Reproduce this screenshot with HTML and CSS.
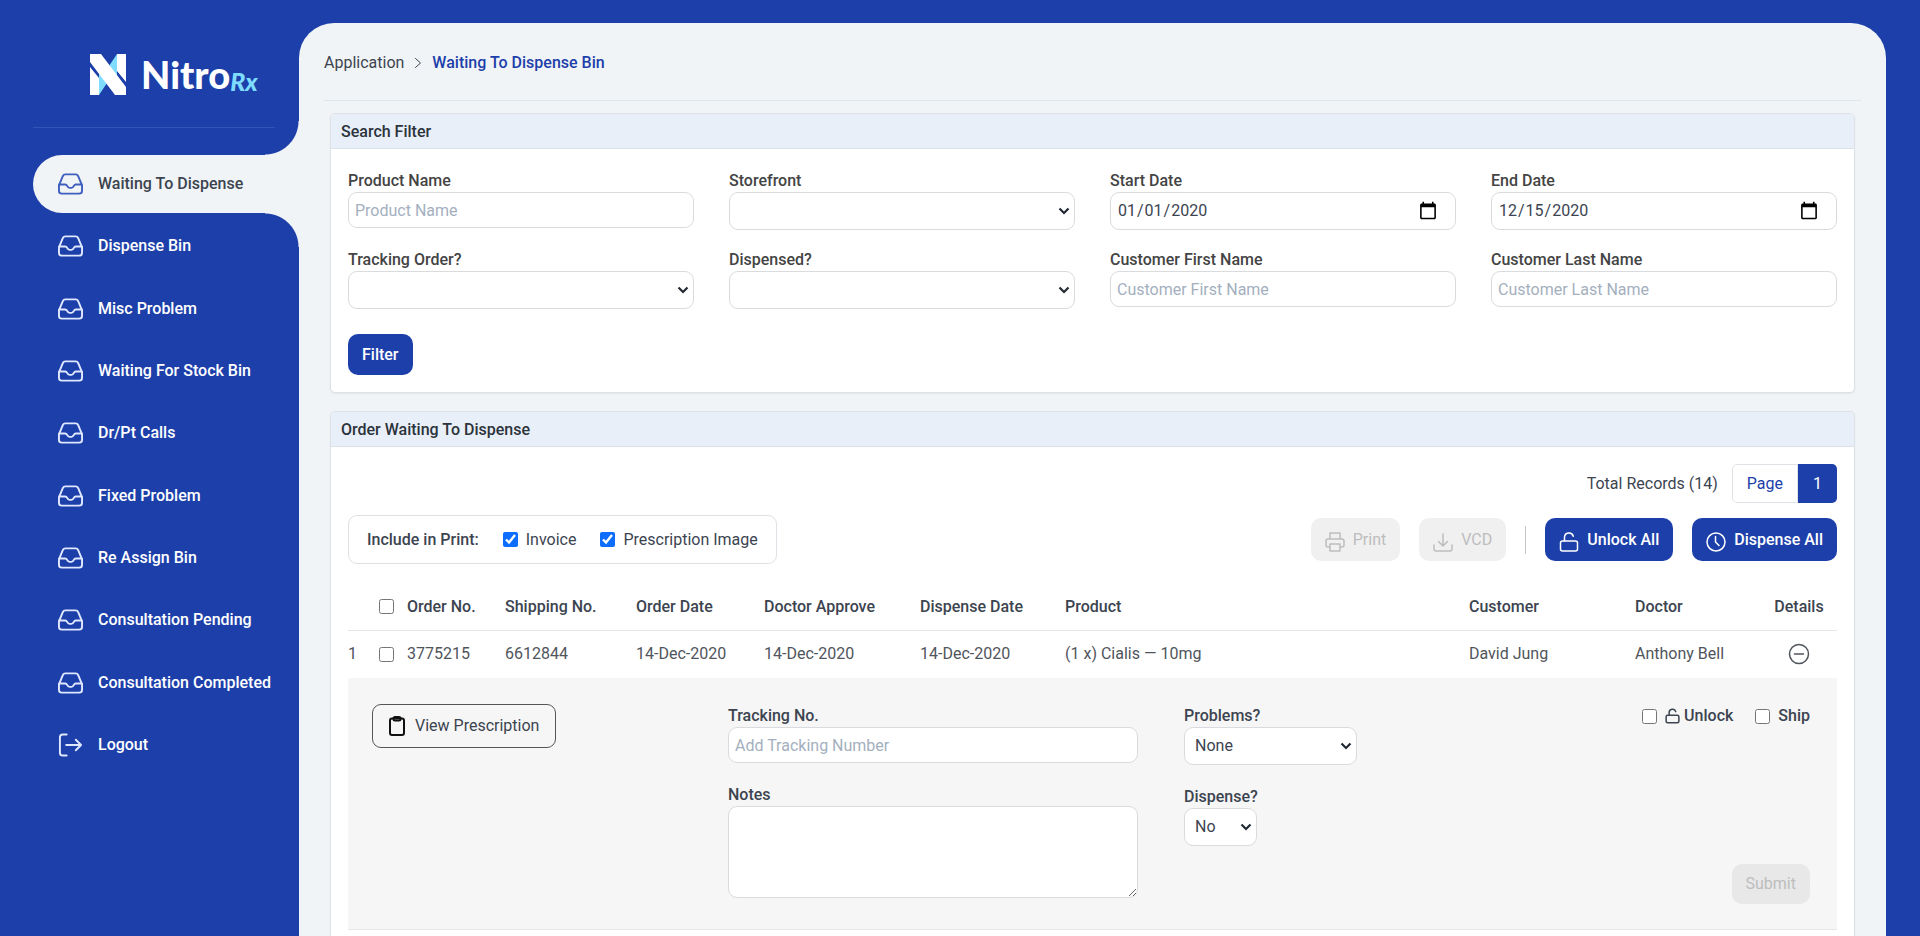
FILE: index.html
```
<!DOCTYPE html>
<html lang="en">
  <head>
    <meta charset="UTF-8" />
    <meta name="viewport" content="width=device-width, initial-scale=1.0" />
    <title>NitroRx | Waiting To Dispense Bin</title>
    <link rel="stylesheet" href="styles.css">
  </head>
  <body>
    <!-- shared icons -->
    <svg class="sprite" aria-hidden="true">
      <symbol id="inbox" viewBox="0 0 26 22">
        <path d="M1 12.500 5 2.900C5.500 1.700 6.300 1 7.600 1h10.800c1.300 0 2.100.7 2.600 1.900l4 9.600V18c0 2-1 3-3 3H4c-2 0-3-1-3-3z" />
        <path d="M1.300 11.500h6.200c1 0 1.500.5 2 1.500.6 1.300 1.300 2 2.500 2h2c1.200 0 1.900-.7 2.500-2 .5-1 1-1.500 2-1.500h6.200" />
      </symbol>
      <symbol id="logout" viewBox="0 0 26 24">
        <path d="M9 1H5C3 1 2 2 2 4v16c0 2 1 3 3 3h4M8.500 12H24M18.500 6.500 24 12l-5.500 5.500" />
      </symbol>
      <symbol id="unlock" viewBox="0 0 20 20">
        <rect x="1.500" y="9" width="17" height="10" rx="2" />
        <path d="M5.500 9V5.500a4.500 4.500 0 0 1 8.800-1.300" />
      </symbol>
    </svg>

    <div class="layout">
      <aside class="sidebar">
        <a class="logo" href="#">
          <svg class="logo-mark" viewBox="0 0 36 41" aria-hidden="true">
            <path d="M27 0v27L17 15z" fill="#7fdcff" />
            <path d="M9 41V14l10 12z" fill="#7fdcff" />
            <path d="M27 0h9v28l-9-11z" fill="#fff" />
            <path d="M0 13l9 11v17H0z" fill="#fff" />
            <path d="M27 18l9 11v3l-9-11zM0 9l9 11v3L0 12z" fill="#1d3faa" />
            <path d="M0 0h11l25 33v8H25L0 8z" fill="#fff" />
          </svg>
          <span class="logo-name">Nitro</span><span class="logo-rx">Rx</span>
        </a>
        <nav>
          <ul class="menu">
            <li><a class="menu-link active" href="#"><svg class="menu-icon"><use href="#inbox" /></svg>Waiting To Dispense</a></li>
            <li><a class="menu-link" href="#"><svg class="menu-icon"><use href="#inbox" /></svg>Dispense Bin</a></li>
            <li><a class="menu-link" href="#"><svg class="menu-icon"><use href="#inbox" /></svg>Misc Problem</a></li>
            <li><a class="menu-link" href="#"><svg class="menu-icon"><use href="#inbox" /></svg>Waiting For Stock Bin</a></li>
            <li><a class="menu-link" href="#"><svg class="menu-icon"><use href="#inbox" /></svg>Dr/Pt Calls</a></li>
            <li><a class="menu-link" href="#"><svg class="menu-icon"><use href="#inbox" /></svg>Fixed Problem</a></li>
            <li><a class="menu-link" href="#"><svg class="menu-icon"><use href="#inbox" /></svg>Re Assign Bin</a></li>
            <li><a class="menu-link" href="#"><svg class="menu-icon"><use href="#inbox" /></svg>Consultation Pending</a></li>
            <li><a class="menu-link" href="#"><svg class="menu-icon"><use href="#inbox" /></svg>Consultation Completed</a></li>
            <li><a class="menu-link" href="#"><svg class="menu-icon"><use href="#logout" /></svg>Logout</a></li>
          </ul>
        </nav>
      </aside>

      <main class="content">
        <nav class="breadcrumb">
          <a href="#">Application</a>
          <svg class="crumb-arrow" viewBox="0 0 8 12"><path d="m1.500 1.500 5 4.500-5 4.500" /></svg>
          <a class="current" href="#">Waiting To Dispense Bin</a>
        </nav>

        <section class="card">
          <h2 class="card-title">Search Filter</h2>
          <form class="filter">
            <div class="field">
              <label for="product">Product Name</label>
              <input id="product" class="control" type="text" placeholder="Product Name" />
            </div>
            <div class="field">
              <label for="storefront">Storefront</label>
              <select id="storefront" class="control"><option></option></select>
            </div>
            <div class="field">
              <label for="start">Start Date</label>
              <input id="start" class="control" type="date" value="2020-01-01" />
            </div>
            <div class="field">
              <label for="end">End Date</label>
              <input id="end" class="control" type="date" value="2020-12-15" />
            </div>
            <div class="field">
              <label for="tracking-order">Tracking Order?</label>
              <select id="tracking-order" class="control"><option></option></select>
            </div>
            <div class="field">
              <label for="dispensed">Dispensed?</label>
              <select id="dispensed" class="control"><option></option></select>
            </div>
            <div class="field">
              <label for="first-name">Customer First Name</label>
              <input id="first-name" class="control" type="text" placeholder="Customer First Name" />
            </div>
            <div class="field">
              <label for="last-name">Customer Last Name</label>
              <input id="last-name" class="control" type="text" placeholder="Customer Last Name" />
            </div>
            <button class="btn btn-filter" type="button">Filter</button>
          </form>
        </section>

        <section class="card">
          <h2 class="card-title">Order Waiting To Dispense</h2>
          <div class="orders">
            <div class="pager">
              <span>Total Records (14)</span>
              <div class="pages">
                <a class="page-label" href="#">Page</a><a class="page-number" href="#">1</a>
              </div>
            </div>

            <div class="toolbar">
              <div class="print-options">
                <span class="print-title">Include in Print:</span>
                <label class="check"><input type="checkbox" checked />Invoice</label>
                <label class="check"><input type="checkbox" checked />Prescription Image</label>
              </div>
              <div class="actions">
                <button class="btn btn-action" type="button" disabled>
                  <svg class="btn-icon" viewBox="0 0 20 20">
                    <path d="M5 7V1h10v6M5 15H3c-1.300 0-2-.7-2-2V9c0-1.300.7-2 2-2h14c1.300 0 2 .7 2 2v4c0 1.300-.7 2-2 2h-2M5 12h10v7H5z" />
                  </svg>
                  Print
                </button>
                <button class="btn btn-action" type="button" disabled>
                  <svg class="btn-icon" viewBox="0 0 20 20">
                    <path d="M1 13v4c0 1.300.7 2 2 2h14c1.300 0 2-.7 2-2v-4M10 2v12M5.500 9.500 10 14l4.500-4.500" />
                  </svg>
                  VCD
                </button>
                <span class="separator"></span>
                <button class="btn btn-action" type="button">
                  <svg class="btn-icon"><use href="#unlock" /></svg>
                  Unlock All
                </button>
                <button class="btn btn-action" type="button">
                  <svg class="btn-icon" viewBox="0 0 20 20">
                    <circle cx="10" cy="10" r="9" />
                    <path d="M9.500 4.500V10l3.500 3.500" />
                  </svg>
                  Dispense All
                </button>
              </div>
            </div>

            <table class="table">
              <colgroup>
                <col class="col-index" />
                <col class="col-check" />
                <col class="col-order" />
                <col class="col-shipping" />
                <col class="col-date" />
                <col class="col-approve" />
                <col class="col-dispense" />
                <col />
                <col class="col-customer" />
                <col class="col-doctor" />
                <col class="col-details" />
              </colgroup>
              <thead>
                <tr>
                  <th></th>
                  <th><input type="checkbox" aria-label="Select all orders" /></th>
                  <th>Order No.</th>
                  <th>Shipping No.</th>
                  <th>Order Date</th>
                  <th>Doctor Approve</th>
                  <th>Dispense Date</th>
                  <th>Product</th>
                  <th>Customer</th>
                  <th>Doctor</th>
                  <th class="center">Details</th>
                </tr>
              </thead>
              <tbody>
                <tr>
                  <td>1</td>
                  <td><input type="checkbox" aria-label="Select order 3775215" /></td>
                  <td>3775215</td>
                  <td>6612844</td>
                  <td>14-Dec-2020</td>
                  <td>14-Dec-2020</td>
                  <td>14-Dec-2020</td>
                  <td>(1 x) Cialis — 10mg</td>
                  <td>David Jung</td>
                  <td>Anthony Bell</td>
                  <td class="center">
                    <button class="toggle" type="button" aria-label="Hide details">
                      <svg viewBox="0 0 22 22"><circle cx="11" cy="11" r="9.500" /><path d="M6.500 11h9" /></svg>
                    </button>
                  </td>
                </tr>
                <tr>
                  <td class="detail-cell" colspan="11">
                    <div class="detail">
                      <div class="detail-view">
                        <button class="btn-outline" type="button">
                          <svg viewBox="0 0 16 20">
                            <rect x="1" y="2.500" width="14" height="16.500" rx="2" />
                            <rect x="4.500" y="1" width="7" height="3.500" rx="1.500" />
                          </svg>
                          View Prescription
                        </button>
                      </div>
                      <div class="detail-notes">
                        <div class="field">
                          <label for="tracking-no">Tracking No.</label>
                          <input id="tracking-no" class="control" type="text" placeholder="Add Tracking Number" />
                        </div>
                        <div class="field">
                          <label for="notes">Notes</label>
                          <textarea id="notes" class="control notes"></textarea>
                        </div>
                      </div>
                      <div class="detail-status">
                        <div class="field">
                          <label for="problems">Problems?</label>
                          <select id="problems" class="control problems"><option>None</option></select>
                        </div>
                        <div class="field">
                          <label for="dispense">Dispense?</label>
                          <select id="dispense" class="control dispense"><option>No</option></select>
                        </div>
                      </div>
                      <div class="detail-submit">
                        <div class="flags">
                          <label class="check"><input type="checkbox" /><span class="lock-label"><svg class="lock"><use href="#unlock" /></svg>Unlock</span></label>
                          <label class="check"><input type="checkbox" />Ship</label>
                        </div>
                        <button class="btn btn-submit" type="button" disabled>Submit</button>
                      </div>
                    </div>
                  </td>
                </tr>
              </tbody>
            </table>
          </div>
        </section>
      </main>
    </div>
  </body>
</html>
```
FILE: styles.css
```
* {
  box-sizing: border-box;
}
html,
body {
  height: 100%;
}
body {
  margin: 0;
  overflow: hidden;
  background-color: #1d3faa;
  color: #3c4450;
  font-family: Roboto, "Liberation Sans", sans-serif;
  font-size: 16px;
  line-height: 24px;
}
a {
  color: inherit;
  text-decoration: none;
}
svg {
  fill: none;
  stroke: currentColor;
  stroke-width: 2;
  stroke-linecap: round;
  stroke-linejoin: round;
}
input,
select,
textarea,
button {
  font: inherit;
  color: inherit;
}
input[type="checkbox"] {
  width: 15px;
  height: 15px;
  margin: 0;
  accent-color: #0d6efd;
}
.sprite {
  display: none;
}

.layout {
  display: flex;
  height: 100%;
  padding: 23px 34px 0 33px;
}

/* Sidebar */
.sidebar {
  flex: 0 0 266px;
}
.logo {
  display: flex;
  align-items: center;
  height: 105px;
  margin-right: 24px;
  padding: 0 0 2px 57px;
  border-bottom: 1px solid #3254b8;
  color: #fff;
}
.logo-mark {
  width: 36px;
  height: 41px;
  margin-right: 15px;
  stroke: none;
}
.logo-name {
  font-family: Lato, sans-serif;
  font-size: 38px;
  font-weight: 900;
  line-height: 48px;
}
.logo-rx {
  align-self: flex-end;
  margin-bottom: 32px;
  color: #7fdcff;
  font-family: Lato, sans-serif;
  font-size: 25px;
  font-style: italic;
  font-weight: 900;
  line-height: 24px;
}
.menu {
  display: flex;
  flex-direction: column;
  justify-content: space-between;
  min-height: 619px;
  margin: 27px 0 0;
  padding: 0;
  list-style: none;
}
.menu-link {
  display: flex;
  align-items: center;
  height: 58px;
  padding-left: 25px;
  color: #fff;
  font-weight: 500;
}
.menu-icon {
  width: 25px;
  height: 24px;
  margin-right: 15px;
  color: #dfe8ff;
  stroke-width: 2;
}
.menu-link.active {
  position: relative;
  border-radius: 29px 0 0 29px;
  background-color: #f1f4f6;
  color: #3c4450;
}
.active .menu-icon {
  color: #3f5fc0;
}
/* Rounded notches above and below the active link */
.menu-link.active::before,
.menu-link.active::after {
  content: "";
  position: absolute;
  right: 0;
  width: 34px;
  height: 34px;
}
.menu-link.active::before {
  bottom: 100%;
  background: radial-gradient(circle at 0 0, transparent 33px, #f1f4f6 34px);
}
.menu-link.active::after {
  top: 100%;
  background: radial-gradient(circle at 0 100%, transparent 33px, #f1f4f6 34px);
}

/* Content */
.content {
  flex: 1;
  min-width: 0;
  padding: 0 25px;
  border-radius: 35px 35px 0 0;
  background-color: #f1f4f6;
  overflow: hidden;
}
.breadcrumb {
  display: flex;
  align-items: center;
  height: 78px;
  margin-bottom: 12px;
  padding-top: 3px;
  border-bottom: 1px solid #e0e7ec;
}
.crumb-arrow {
  width: 8px;
  height: 12px;
  margin: 0 10px;
  stroke-width: 1;
}
.breadcrumb .current {
  color: #1d3faa;
  font-weight: 500;
}
.card {
  margin: 0 6px 18px;
  border: 1px solid #dde2e6;
  border-radius: 5px;
  background-color: #fff;
  box-shadow: 0 1px 2px rgba(0, 0, 0, 0.06);
}
.card-title {
  margin: 0;
  padding: 6px 10px 4px;
  border-bottom: 1px solid #dae1e7;
  border-radius: 4px 4px 0 0;
  background-color: #e8eff9;
  font-size: 16px;
  font-weight: 500;
  line-height: 24px;
  color: #2c333b;
}
.filter {
  display: grid;
  grid-template-columns: repeat(4, 1fr);
  column-gap: 35px;
  padding: 20px 17px 17px;
}
.field {
  min-height: 79px;
}
.field label {
  display: block;
  color: #444;
  font-weight: 500;
  line-height: 23px;
}
.control {
  display: block;
  width: 100%;
  height: 36px;
  padding: 0 6px;
  border: 1px solid #d9dbdf;
  border-radius: 9px;
  background-color: #fff;
}
.control::placeholder {
  color: #a4afbe;
}
select.control,
input[type="date"].control {
  height: 38px;
}
select.control {
  appearance: none;
  padding: 0 24px 0 10px;
  background-image: url("data:image/svg+xml,%3Csvg xmlns='http://www.w3.org/2000/svg' viewBox='0 0 12 8'%3E%3Cpath d='M1.500 1.500 6 6l4.500-4.500' fill='none' stroke='%23222933' stroke-width='2.200'/%3E%3C/svg%3E");
  background-position: right 4px center;
  background-repeat: no-repeat;
  background-size: 12px 8px;
}
input[type="date"].control {
  padding-right: 15px;
}
input[type="date"]::-webkit-calendar-picker-indicator {
  width: 20px;
  height: 20px;
}
.btn {
  height: 43px;
  border: 0;
  border-radius: 10px;
  background-color: #1d3faa;
  color: #fff;
  font-weight: 500;
}
.btn:disabled {
  background-color: #f0f0f0;
  color: #bdbdbd;
  font-weight: 400;
}
.btn-filter {
  justify-self: start;
  height: 41px;
  padding: 0 14px;
  margin-top: 7px;
}

/* Orders */
.orders {
  padding: 17px;
}
.pager,
.toolbar,
.actions,
.print-options,
.pages {
  display: flex;
  align-items: center;
}
.pager {
  justify-content: flex-end;
  gap: 14px;
  margin-bottom: 12px;
}
.pages {
  height: 39px;
  border-radius: 5px;
  overflow: hidden;
}
.page-label,
.page-number {
  height: 39px;
  line-height: 39px;
}
.page-label {
  padding: 0 14px;
  border: 1px solid #dee2e6;
  border-radius: 5px 0 0 5px;
  color: #1d3faa;
  line-height: 37px;
}
.page-number {
  padding: 0 15px;
  background-color: #1d3faa;
  color: #fff;
}
.toolbar {
  justify-content: space-between;
}
.print-options {
  gap: 24px;
  height: 49px;
  padding: 0 18px;
  border: 1px solid #dee2e6;
  border-radius: 9px;
}
.print-title {
  font-weight: 500;
}
.check {
  display: flex;
  align-items: center;
  gap: 8px;
}
.actions {
  gap: 19px;
}
.btn-action {
  display: flex;
  align-items: center;
  gap: 8px;
  padding: 0 14px;
}
.btn-icon {
  width: 20px;
  height: 20px;
  margin-top: 4px;
  stroke-width: 1.5;
}
.separator {
  width: 1px;
  height: 28px;
  background-color: #c4c8cc;
}
.table {
  width: 100%;
  margin-top: 20px;
  border-collapse: collapse;
  table-layout: fixed;
}
.table th,
.table td {
  padding: 0;
  text-align: left;
  font-weight: 400;
  white-space: nowrap;
}
.table th {
  height: 46px;
  border-bottom: 1px solid #e4e6e9;
  font-weight: 500;
}
.table td {
  height: 48px;
  color: #50555c;
}
.table input[type="checkbox"] {
  display: block;
}
.table .center {
  text-align: center;
}
.col-index {
  width: 31px;
}
.col-check {
  width: 28px;
}
.col-order {
  width: 98px;
}
.col-shipping {
  width: 131px;
}
.col-date {
  width: 128px;
}
.col-approve {
  width: 156px;
}
.col-dispense {
  width: 145px;
}
.col-customer {
  width: 166px;
}
.col-doctor {
  width: 126px;
}
.col-details {
  width: 76px;
}
.toggle {
  display: block;
  margin: 0 auto;
  padding: 0;
  border: 0;
  background: none;
}
.toggle svg {
  display: block;
  width: 22px;
  height: 22px;
  stroke-width: 1.5;
}

/* Expanded row */
.table .detail-cell {
  height: auto;
  border-bottom: 1px solid #e4e6e9;
  background-color: #f6f6f6;
  color: #3c4450;
}
.detail {
  display: grid;
  grid-template-columns: 356px 410px 1fr auto;
  padding: 26px 27px 25px 24px;
}
.detail-notes {
  padding-bottom: 6px;
}
.detail-status {
  padding-left: 46px;
}
.detail-status .field {
  min-height: 81px;
}
.btn-outline {
  display: flex;
  align-items: center;
  gap: 10px;
  height: 44px;
  padding: 0 16px;
  border: 1px solid #555;
  border-radius: 9px;
  background: none;
}
.btn-outline svg {
  width: 16px;
  height: 20px;
  color: #111;
}
.notes {
  height: 92px;
}
.detail .field label {
  color: #3c4450;
}
.detail .problems {
  width: 173px;
}
.detail .dispense {
  width: 73px;
}
.detail-submit {
  display: flex;
  flex-direction: column;
  align-items: flex-end;
  justify-content: space-between;
}
.flags {
  display: flex;
  gap: 22px;
  font-weight: 500;
}
.lock-label {
  display: flex;
  align-items: center;
  gap: 4px;
}
.lock {
  width: 15px;
  height: 16px;
}
.btn-submit {
  height: 40px;
  padding: 0 14px;
}
.btn-submit:disabled {
  background-color: #e8e8e8;
}
```
